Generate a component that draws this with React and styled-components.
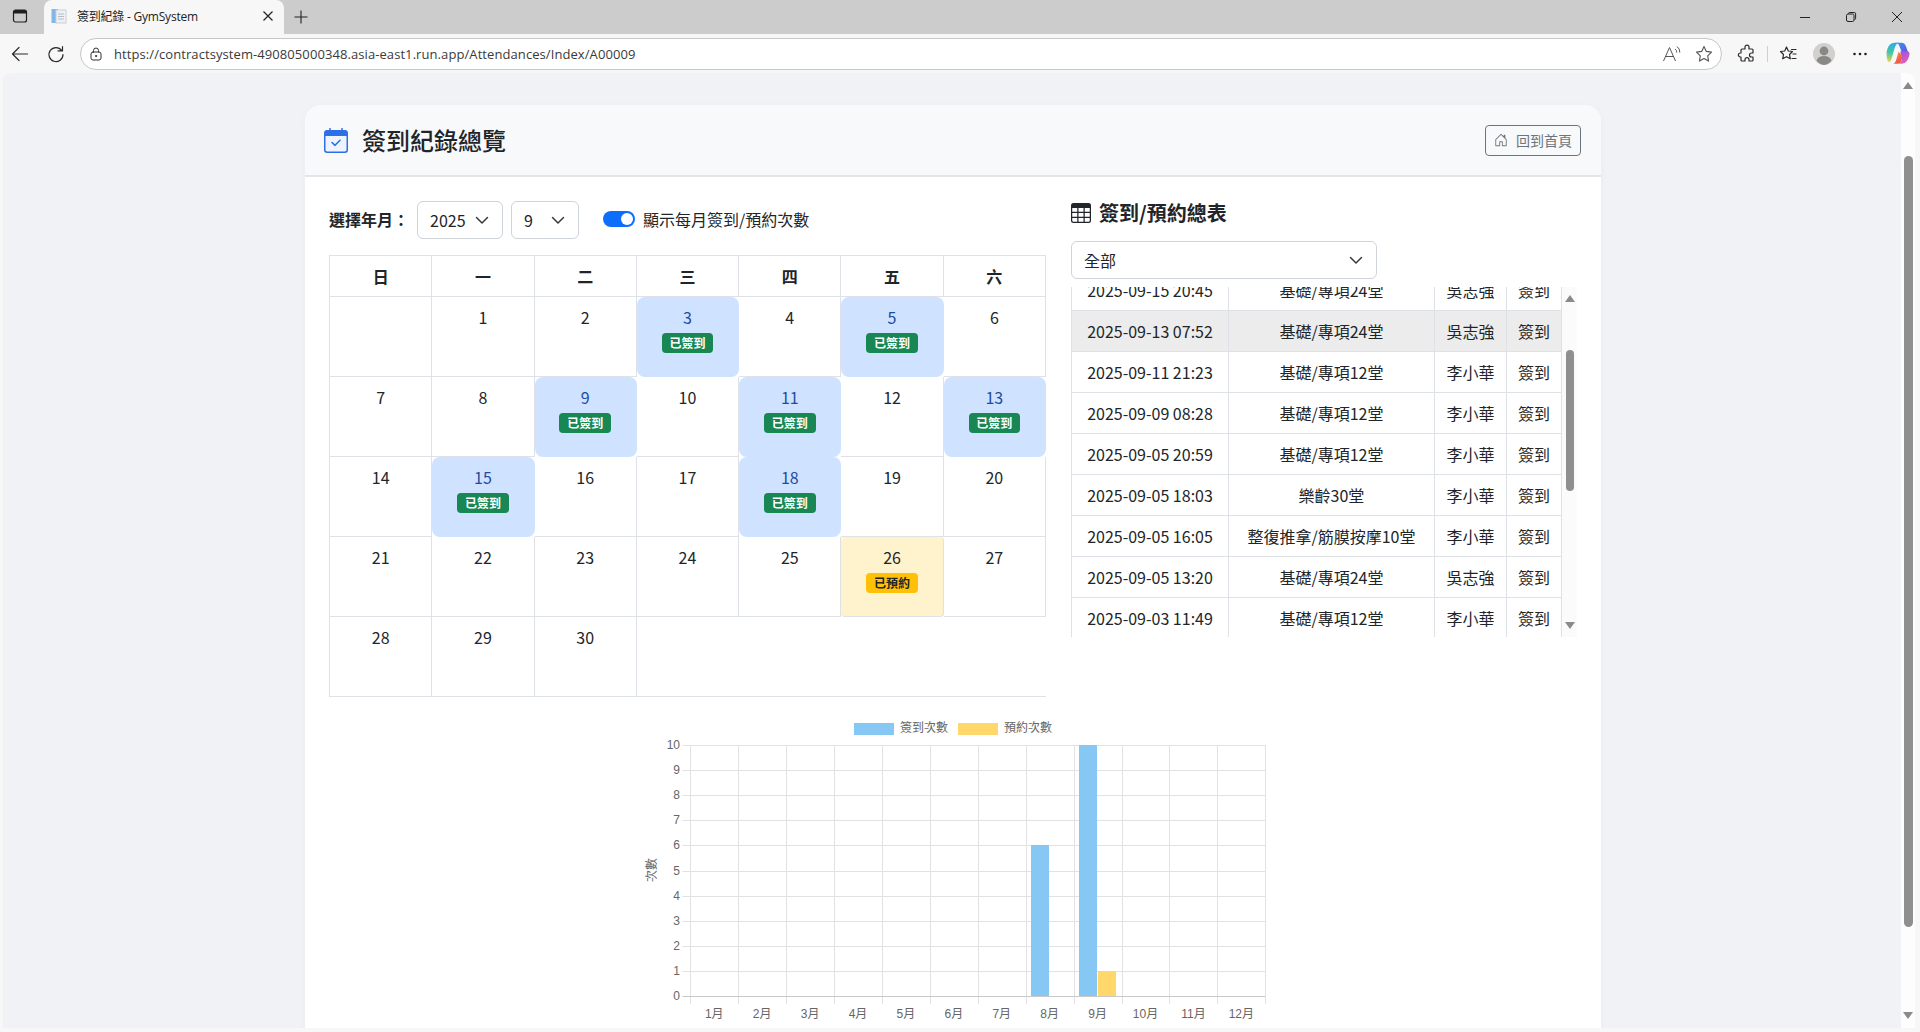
import React from "react";
import styled, { createGlobalStyle } from "styled-components";
import { BsTable, BsHouseDoor } from "react-icons/bs";

const Global = createGlobalStyle`
  html, body { margin: 0; padding: 0; height: 100%; overflow: hidden; }
  body { font-family: "Noto Sans CJK TC", "Noto Sans", sans-serif; color: #212529; font-size: 16px; }
  * { box-sizing: border-box; }
`;

const Win = styled.div`
  width: 1920px; height: 1032px; display: flex; flex-direction: column; background: #f7f7f7; overflow: hidden;
`;
const TabStrip = styled.div`
  height: 34px; flex: none; background: #cccccc; display: flex; align-items: stretch;
`;
const StripIcon = styled.div`
  width: 44px; display: flex; align-items: center; justify-content: center; padding: 0 5px 2px 0;
`;
const Tab = styled.div`
  width: 240px; background: #f7f7f7; border-radius: 8px 8px 0 0; display: flex; align-items: center;
  padding: 0 8px 2px 7px; font-size: 12px; color: #222; gap: 10px;
  font-family: "Open Sans", "Noto Sans CJK TC", sans-serif;
`;
const TabTitle = styled.span` flex: 1; white-space: nowrap; letter-spacing: -0.22px; `;
const NewTab = styled.div` width: 34px; display: flex; align-items: center; justify-content: center; `;
const Spacer = styled.div` flex: 1; `;
const WinBtn = styled.div` width: 46px; display: flex; align-items: center; justify-content: center; `;
const Toolbar = styled.div`
  height: 39px; flex: none; display: flex; align-items: center;
`;
const NavBtn = styled.div`
  width: ${p => p.$w || 36}px; height: 32px; display: flex; align-items: center; justify-content: center; flex: none;
`;
const UrlBar = styled.div`
  flex: none; width: 1642px; height: 32px; margin-left: 8px; border: 1px solid #c6c6c6; border-radius: 16px; background: #fff;
  display: flex; align-items: center; padding: 0 1px 0 7px; font-size: 13px; color: #3a3a3a;
  font-family: "Open Sans", sans-serif;
`;
const Url = styled.span` flex: 1; margin-left: 10px; white-space: nowrap; letter-spacing: 0.08px; `;
const Divider = styled.div` width: 1px; height: 16px; background: #cfcfcf; margin: 0 2px; flex: none; `;
const Viewport = styled.div`
  height: 955px; flex: none; margin: 0 5px 0 3px; background: #f0f2f5; border-radius: 8px 8px 0 0; display: flex; overflow: hidden;
`;
const Page = styled.div` flex: 1; min-width: 0; padding: 32px 0 0 2px; display: flex; justify-content: center; `;
const PageScroll = styled.div`
  width: 14px; flex: none; background: #fdfdfd; display: flex; flex-direction: column; align-items: center; padding-top: 9px;
`;
const ArrowUp = styled.div`
  width: 0; height: 0; border-left: 5px solid transparent; border-right: 5px solid transparent; border-bottom: 7px solid #8a8a8a; flex: none;
`;
const ArrowDown = styled(ArrowUp)` border-bottom: 0; border-top: 7px solid #8a8a8a; `;
const Thumb = styled.div`
  width: ${p => p.$w}px; height: ${p => p.$h}px; margin-top: ${p => p.$t}px; margin-bottom: ${p => p.$b}px;
  border-radius: 5px; background: #8f8f8f; flex: none;
`;
const Card = styled.div`
  width: 1296px; height: 1100px; flex: none; background: #fff; border-radius: 16px 16px 0 0; box-shadow: 0 2px 10px rgba(0,0,0,.03); overflow: hidden;
`;
const CardHeader = styled.div`
  height: 72px; background: #f8f9fa; border-bottom: 2px solid #e3e5e8; display: flex; align-items: center; justify-content: space-between; padding: 0 20px 0 19px;
`;
const Title = styled.h1`
  margin: 0; font-size: 24px; font-weight: 500; line-height: 36px; color: #212529; display: flex; align-items: center; gap: 14px;
`;
const HomeBtn = styled.div`
  width: 96px; height: 31px; border: 1px solid #6c757d; border-radius: 4px; color: #6c757d; font-size: 14px; display: flex; align-items: center; justify-content: center; gap: 8px;
`;
const Body = styled.div` padding: 24px 24px 0; `;
const Columns = styled.div` display: grid; grid-template-columns: 717px 506px; column-gap: 25px; `;
const Controls = styled.div` display: flex; align-items: center; height: 38px; margin-bottom: 16px; `;
const Label = styled.div` font-weight: 700; width: 88px; white-space: nowrap; margin-top: -2px; `;
const Select = styled.div`
  width: ${p => p.$w}px; height: 38px; flex: none; border: 1px solid #ced4da; border-radius: 6px; background: #fff; display: flex; align-items: center; justify-content: space-between;
  padding: 0 12px; line-height: 24px; margin-right: ${p => p.$mr || 0}px;
`;
const Toggle = styled.div`
  width: 32px; height: 16px; border-radius: 8px; background: #0d6efd; margin: -2px 8px 0 24px; display: flex; justify-content: flex-end; align-items: center; padding-right: 2px; flex: none;
`;
const Knob = styled.div` width: 12px; height: 12px; border-radius: 50%; background: #fff; `;
const ToggleText = styled.div` color: #212529; white-space: nowrap; margin-top: -2px; `;
const Calendar = styled.div`
  display: grid; grid-template-columns: repeat(7, 1fr); border-left: 1px solid #dee2e6; border-top: 1px solid #dee2e6;
`;
const HeadCell = styled.div`
  height: 41px; border-right: 1px solid #dee2e6; border-bottom: 1px solid #dee2e6; display: flex; align-items: center; justify-content: center; font-weight: 700;
`;
const tones = {
  done: "background:#cfe2ff;color:#1d4d9e;border-radius:8px;border-color:transparent;",
  booked: "background:#fff3cd;border-radius:4px;",
  none: "",
};
const DayCell = styled.div`
  height: 80px; border-right: 1px solid #dee2e6; border-bottom: 1px solid #dee2e6; display: flex; flex-direction: column; align-items: center; padding-top: 8px; line-height: 24px;
  ${p => tones[p.$tone || "none"]}
`;
const Filler = styled.div` grid-column: span 4; border-bottom: 1px solid #dee2e6; `;
const Badge = styled.span`
  margin-top: 4px; height: 20px; padding: 0 7.8px; border-radius: 4px; font-size: 12px; line-height: 20px; font-weight: 700;
  color: ${p => p.$warn ? "#212529" : "#fff"}; background: ${p => p.$warn ? "#ffc107" : "#198754"};
`;
const SideTitle = styled.h2`
  margin: 0 0 16px; height: 24px; font-size: 20px; line-height: 24px; font-weight: 700; display: flex; align-items: center; gap: 8px; color: #212529;
`;
const SideSelect = styled(Select)` margin-bottom: 8px; margin-right: 0; `;
const TableWrap = styled.div` width: 506px; height: 350px; display: flex; overflow: hidden; `;
const Clip = styled.div` width: 491px; height: 350px; overflow: hidden; `;
const Records = styled.table`
  width: 491px; margin-top: -18px; border-collapse: collapse; table-layout: fixed;
  td { height: 41px; padding: 0; border: 1px solid #dee2e6; text-align: center; white-space: nowrap; line-height: 24px; }
`;
const Row = styled.tr` background: ${p => p.$hover ? "#ececec" : "#fff"}; `;
const TableScroll = styled.div`
  width: 15px; flex: none; background: #fbfbfb; display: flex; flex-direction: column; align-items: center; padding-top: 8px;
`;
const ChartBox = styled.div` width: 640px; height: 400px; margin: 13px auto 0; `;
const Axis = styled.text`
  font-family: "Liberation Sans", "Noto Sans CJK TC", sans-serif; font-size: 12px; fill: #666;
`;

const rows = [
  ["2025-09-15 20:45", "基礎/專項24堂", "吳志強"],
  ["2025-09-13 07:52", "基礎/專項24堂", "吳志強", true],
  ["2025-09-11 21:23", "基礎/專項12堂", "李小華"],
  ["2025-09-09 08:28", "基礎/專項12堂", "李小華"],
  ["2025-09-05 20:59", "基礎/專項12堂", "李小華"],
  ["2025-09-05 18:03", "樂齡30堂", "李小華"],
  ["2025-09-05 16:05", "整復推拿/筋膜按摩10堂", "李小華"],
  ["2025-09-05 13:20", "基礎/專項24堂", "吳志強"],
  ["2025-09-03 11:49", "基礎/專項12堂", "李小華"],
];
const done = [3, 5, 9, 11, 13, 15, 18];
const Chevron = () => (
  <svg width="16" height="12" viewBox="0 0 16 12" fill="none" stroke="#343a40" strokeWidth="1.5" strokeLinecap="round" strokeLinejoin="round"><path d="M2.5 3.500L8 9l5.500-5.500" /></svg>
);

const CalendarIcon = () => (
  <svg width="24" height="25" viewBox="0 0 24 25" style={{ flex: "none" }}>
    <rect x="0.75" y="2.750" width="22.500" height="21.500" rx="2.500" fill="#eef4ff" stroke="#2d6fe6" strokeWidth="1.500" />
    <path d="M0.750 5.250a2.500 2.500 0 0 1 2.500-2.500h17.500a2.500 2.500 0 0 1 2.500 2.500v2.750H.75z" fill="#2d6fe6" />
    <path d="M6 .5v3M18 .5v3" stroke="#2d6fe6" strokeWidth="1.500" strokeLinecap="round" />
    <path d="M8 14.500l3 2.800 5-5" fill="none" stroke="#2d6fe6" strokeWidth="1.600" strokeLinecap="round" strokeLinejoin="round" />
  </svg>
);

function Chart() {
  const ox = 57.3, oy = 35, w = 575, h = 251, step = w / 12, ys = h / 10;
  const px = i => Math.round(ox + i * step) + 0.5;
  const py = i => Math.round(oy + h - i * ys) + 0.5;
  const months = Array.from({ length: 12 }, (_, i) => `${i + 1}月`);
  return (
    <svg width="640" height="400" viewBox="0 0 640 400">
      <rect x="221" y="13" width="40" height="12" fill="#86c7f3" />
      <Axis x="267" y="22">簽到次數</Axis>
      <rect x="325" y="13" width="40" height="12" fill="#ffd76b" />
      <Axis x="371" y="22">預約次數</Axis>
      {Array.from({ length: 13 }, (_, i) => (
        <line key={i} x1={px(i)} x2={px(i)} y1={oy} y2={oy + h + 8} stroke="#e2e2e2" />
      ))}
      {Array.from({ length: 11 }, (_, i) => (
        <g key={i}>
          <line x1={ox - 8} x2={ox + w} y1={py(i)} y2={py(i)} stroke={i === 0 ? "#c9c9c9" : "#e2e2e2"} />
          <Axis x={47} y={py(i) + 3} textAnchor="end">{i}</Axis>
        </g>
      ))}
      {months.map((m, i) => (
        <Axis key={m} x={ox + step * (i + 0.5)} y={308} textAnchor="middle">{m}</Axis>
      ))}
      <Axis transform="translate(23,160) rotate(-90)" textAnchor="middle">次數</Axis>
      <rect x="398" y="135" width="18" height="151" fill="#86c7f3" />
      <rect x="446" y="35" width="18" height="251" fill="#86c7f3" />
      <rect x="465" y="261" width="18" height="25" fill="#ffd76b" />
    </svg>
  );
}

const sw = { fill: "none", stroke: "#2b2b2b", strokeWidth: 1.2, strokeLinecap: "round", strokeLinejoin: "round" };

export default function App() {
  const first = Array.from({ length: 30 }, (_, i) => i + 1);
  return (
    <Win>
      <Global />
      <TabStrip>
        <StripIcon>
          <svg width="16" height="16" viewBox="0 0 16 16"><rect x="1.500" y="2" width="13" height="12" rx="2" fill="none" stroke="#1f1f1f" strokeWidth="1.200" /><path d="M1.500 4a2 2 0 0 1 2-2h9a2 2 0 0 1 2 2v1.600h-13z" fill="#1f1f1f" /></svg>
        </StripIcon>
        <Tab>
          <svg width="16" height="16" viewBox="0 0 16 16" style={{ flex: "none" }}><rect x="0.500" y="1" width="6.500" height="14" fill="#7fb8e6" /><rect x="5" y="2" width="10" height="13" fill="#eef1f4" stroke="#c9ced3" /><path d="M7 6h6M7 8.500h6M7 11h6" stroke="#b5bcc3" /></svg>
          <TabTitle>簽到紀錄 - GymSystem</TabTitle>
          <svg width="16" height="16" viewBox="0 0 16 16"><path d="M3.500 3.500l9 9M12.500 3.500l-9 9" stroke="#222" strokeWidth="1.200" /></svg>
        </Tab>
        <NewTab>
          <svg width="16" height="16" viewBox="0 0 16 16"><path d="M8 1.500v13M1.500 8h13" stroke="#222" strokeWidth="1.100" /></svg>
        </NewTab>
        <Spacer />
        <WinBtn><svg width="12" height="12" viewBox="0 0 12 12"><path d="M1 6.500h10" stroke="#222" /></svg></WinBtn>
        <WinBtn><svg width="12" height="12" viewBox="0 0 12 12"><rect x="1.500" y="3" width="7.500" height="7.500" rx="1.500" fill="none" stroke="#222" /><path d="M3.500 3V2.500A1.200 1.200 0 0 1 4.700 1.500h4.600a1.300 1.300 0 0 1 1.300 1.300v4.600A1.200 1.200 0 0 1 9.500 8.600" fill="none" stroke="#222" /></svg></WinBtn>
        <WinBtn><svg width="12" height="12" viewBox="0 0 12 12"><path d="M1 1l10 10M11 1L1 11" stroke="#222" /></svg></WinBtn>
      </TabStrip>
      <Toolbar>
        <NavBtn $w={40}><svg width="18" height="18" viewBox="0 0 18 18" {...sw}><path d="M16.500 9H1.500M8 2.500L1.500 9 8 15.500" /></svg></NavBtn>
        <NavBtn $w={32}><svg width="18" height="18" viewBox="0 0 18 18" {...sw}><path d="M14.700 5.500A7 7 0 1 0 16 9.500M15.500 1.500v4.400h-4.400" /></svg></NavBtn>
        <UrlBar>
          <svg width="16" height="16" viewBox="0 0 16 16" {...sw} stroke="#333" strokeWidth="1"><rect x="3" y="6" width="10" height="8" rx="2" /><path d="M5.500 6V4.500a2.500 2.500 0 0 1 5 0V6" /><circle cx="8" cy="10" r=".6" fill="#333" /></svg>
          <Url>https://contractsystem-490805000348.asia-east1.run.app/Attendances/Index/A00009</Url>
          <NavBtn $w={32}><svg width="20" height="20" viewBox="0 0 20 20" fill="none" stroke="#555" strokeWidth="1"><path d="M1.500 17L7.500 3.500l6 13.500M3.500 12.500h8" /><path d="M13 5a4 4 0 0 1 1.800 3.500M15 2.500a7 7 0 0 1 2.800 6" /></svg></NavBtn>
          <NavBtn $w={32}><svg width="20" height="20" viewBox="0 0 20 20" {...sw} stroke="#555" strokeWidth="1.100"><path d="M10 2.500l2.300 4.900 5.200.7-3.800 3.700.9 5.300-4.600-2.600-4.600 2.600.9-5.300L2.500 8.100l5.200-.7z" /></svg></NavBtn>
        </UrlBar>
        <NavBtn $w={7} />
        <NavBtn $w={36}><svg width="20" height="20" viewBox="0 0 20 20" {...sw}><path d="M8 3.200a2 2 0 0 1 4 0V5h3a1 1 0 0 1 1 1v3h-1.500a2 2 0 0 0 0 4H16v3a1 1 0 0 1-1 1h-3v-1.300a2 2 0 0 0-4 0V17H5a1 1 0 0 1-1-1v-3h-.6a2 2 0 0 1 0-4H4V6a1 1 0 0 1 1-1h3z" /></svg></NavBtn>
        <Divider />
        <NavBtn $w={36}><svg width="20" height="20" viewBox="0 0 20 20" {...sw}><path d="M8.500 3l1.800 4 4.200.5-3 3 .8 4.300-3.800-2.100-3.800 2.100.8-4.300-3-3 4.200-.5zM13.500 5.500H18M15 10h3M14 14.500h4" /></svg></NavBtn>
        <NavBtn $w={36}><svg width="22" height="22" viewBox="0 0 22 22"><circle cx="11" cy="11" r="11" fill="#d2d0ce" /><circle cx="11" cy="8" r="4.400" fill="#8a8886" /><path d="M3.500 17.500c1-3.200 4-4.600 7.500-4.600s6.500 1.400 7.500 4.600A11 11 0 0 1 11 22a11 11 0 0 1-7.500-4.500z" fill="#8a8886" /></svg></NavBtn>
        <NavBtn $w={36}><svg width="16" height="16" viewBox="0 0 16 16" fill="#222"><circle cx="2.500" cy="8" r="1.300" /><circle cx="8" cy="8" r="1.300" /><circle cx="13.500" cy="8" r="1.300" /></svg></NavBtn>
        <NavBtn $w={40}>
          <svg width="24" height="23" viewBox="1.500 2.500 21 20">
            <defs>
              <linearGradient id="cpL" x1="0.500" y1="0" x2="0.300" y2="1"><stop offset="0" stopColor="#2fa8f0" /><stop offset="0.550" stopColor="#45c8a0" /><stop offset="1" stopColor="#f2d24a" /></linearGradient>
              <linearGradient id="cpT" x1="0" y1="0" x2="1" y2="1"><stop offset="0" stopColor="#2f9ff0" /><stop offset="1" stopColor="#6a4fe0" /></linearGradient>
              <linearGradient id="cpR" x1="0.300" y1="0" x2="0.700" y2="1"><stop offset="0" stopColor="#9a55e6" /><stop offset="1" stopColor="#ee5fb0" /></linearGradient>
              <linearGradient id="cpB" x1="0" y1="0" x2="0.700" y2="1"><stop offset="0" stopColor="#f9a23c" /><stop offset="1" stopColor="#ee4b48" /></linearGradient>
            </defs>
            <path d="M2 13c0-5 2.500-10 7-10h4c-2 .3-3.200 2.200-4 5l-2.500 8.500C6 19 4.800 20.500 3.800 20 2.500 19 2 16 2 13z" fill="url(#cpL)" />
            <path d="M9 3h6c2.200 0 3.300 1.300 4 3.300l1.800 5.200-5.300.3L13 5.500C12.500 4 11.500 3 9 3z" fill="url(#cpT)" />
            <path d="M14 10.500h5.500c1.800 0 3 1 2.500 3-.5 2.500-1.700 5-3 6.500-1 1.100-2.500 1.500-4 1.500h-2.500c1.500-.5 2.500-2 3-4z" fill="url(#cpR)" />
            <path d="M7.500 21.500c1.300 0 2.300-1.500 3-3.800l1.200-4.200.8-2.500 2 2 1.200 3.500c-.8 3-1.800 5-3.700 5z" fill="url(#cpB)" />
          </svg>
        </NavBtn>
      </Toolbar>
      <Viewport>
        <Page>
          <Card>
            <CardHeader>
              <Title><CalendarIcon />簽到紀錄總覽</Title>
              <HomeBtn><BsHouseDoor size={14} />回到首頁</HomeBtn>
            </CardHeader>
            <Body>
              <Columns>
                <div>
                  <Controls>
                    <Label>選擇年月：</Label>
                    <Select $w={86} $mr={8}>2025<Chevron /></Select>
                    <Select $w={68}>9<Chevron /></Select>
                    <Toggle><Knob /></Toggle>
                    <ToggleText>顯示每月簽到/預約次數</ToggleText>
                  </Controls>
                  <Calendar>
                    {["日", "一", "二", "三", "四", "五", "六"].map(d => <HeadCell key={d}>{d}</HeadCell>)}
                    <DayCell />
                    {first.map(d => (
                      <DayCell key={d} $tone={done.includes(d) ? "done" : d === 26 ? "booked" : "none"}>
                        {d}
                        {done.includes(d) && <Badge>已簽到</Badge>}
                        {d === 26 && <Badge $warn>已預約</Badge>}
                      </DayCell>
                    ))}
                    <Filler />
                  </Calendar>
                </div>
                <div>
                  <SideTitle><BsTable size={20} />簽到/預約總表</SideTitle>
                  <SideSelect $w={306}>全部<Chevron /></SideSelect>
                  <TableWrap>
                    <Clip>
                      <Records>
                        <colgroup><col width="157" /><col width="206" /><col width="72" /><col width="55" /></colgroup>
                        <tbody>
                          {rows.map(r => (
                            <Row key={r[0]} $hover={r[3]}>
                              <td>{r[0]}</td><td>{r[1]}</td><td>{r[2]}</td><td>簽到</td>
                            </Row>
                          ))}
                        </tbody>
                      </Records>
                    </Clip>
                    <TableScroll>
                      <ArrowUp />
                      <Thumb $w={8} $h={141} $t={48} $b={131} />
                      <ArrowDown />
                    </TableScroll>
                  </TableWrap>
                </div>
              </Columns>
              <ChartBox><Chart /></ChartBox>
            </Body>
          </Card>
        </Page>
        <PageScroll>
          <ArrowUp />
          <Thumb $w={9} $h={771} $t={67} $b={85} />
          <ArrowDown />
        </PageScroll>
      </Viewport>
    </Win>
  );
}
